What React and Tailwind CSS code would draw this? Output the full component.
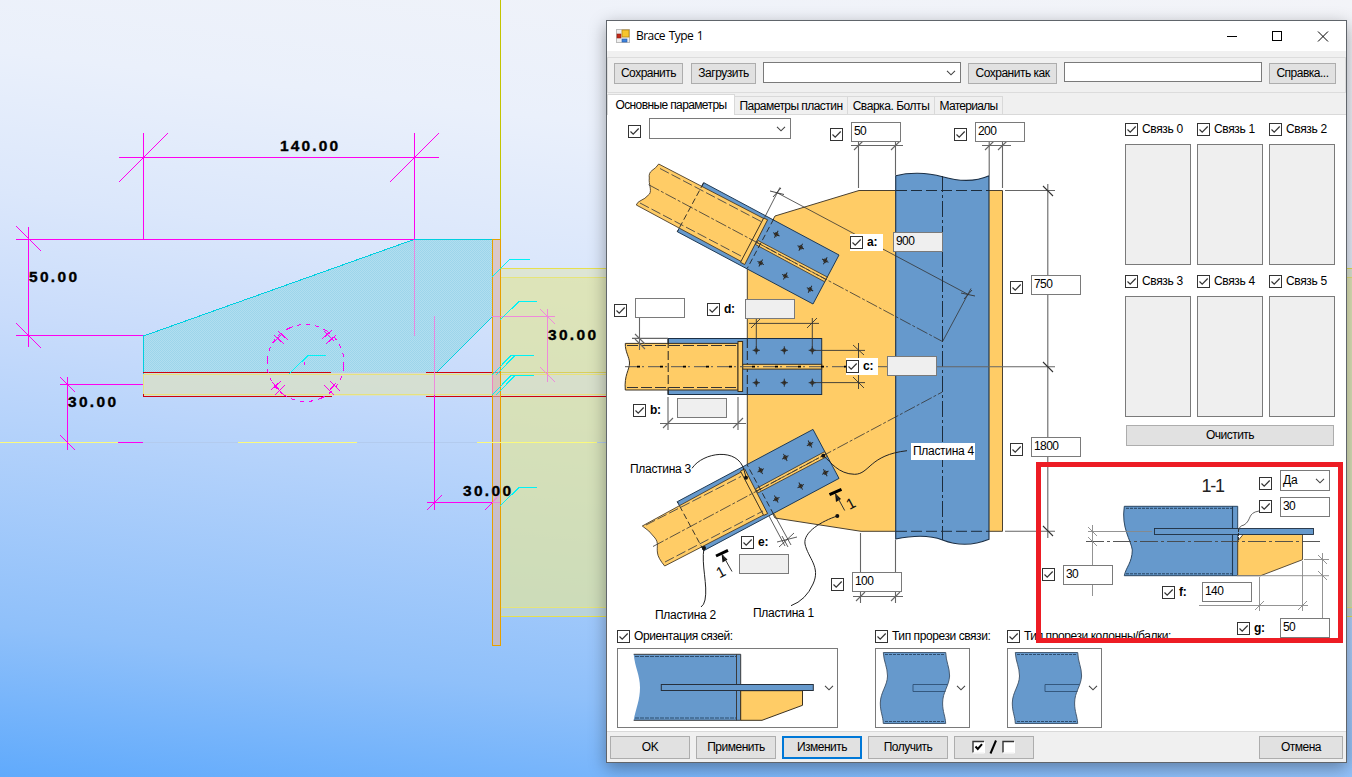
import React from "react";

/* ---------- model view behind the dialog ---------- */

const WELDS = [
  "492,277 510,259 530,259",
  "500,320 519,301.5 537,301.5",
  "492,375 511,355.5 534,355.5",
  "496,375 515,355.5",
  "492,395 511,375.5 534,375.5",
  "496,395 515,375.5",
  "500,506 519,487.5 537,487.5",
  "289,374 308,355.5 326,355.5",
];

function ModelView() {
  return (
    <svg className="absolute inset-0" width="1352" height="777" viewBox="0 0 1352 777" fill="none">
      <defs>
        <pattern id="hatch" width="2" height="2" patternUnits="userSpaceOnUse">
          <rect width="1" height="1" fill="#4fb4dc" opacity=".22" />
          <rect x="1" y="1" width="1" height="1" fill="#4fb4dc" opacity=".22" />
        </pattern>
      </defs>
      <g shapeRendering="crispEdges">
        <rect x="500" y="268" width="852" height="349" fill="#e0e49c" fillOpacity=".7" />
        <rect x="500" y="269" width="852" height="9" fill="#dbe6f0" fillOpacity=".5" />
        <rect x="500" y="607" width="852" height="9" fill="#b4d0e6" fillOpacity=".75" />
        <path d="M501 268.5H1352M501 616.5H1352" stroke="#e6e04e" />
        <path d="M501 277.5H1352M501 607.5H1352" stroke="#e6e47a" />
        <polygon points="143,336 414,240 492,240 492,317 436,373 143,373" fill="#b2def0" />
        <polygon points="143,336 414,240 492,240 492,317 436,373 143,373" fill="url(#hatch)" />
        <rect x="143" y="373" width="464" height="23" fill="#d6dfcd" fillOpacity=".9" />
        <path d="M143.5 374V336L414 239.5H492M492 317L436 373" stroke="#00cfdf" />
        <path d="M143 372.5H500M143 396.5H332" stroke="#b9cfe6" />
        <path d="M143 374.5H607M143 394.5H607M143.5 374V394" stroke="#e8e27c" />
        <path d="M143 372.5H331M426 372.5H500M143.5 394V397M143 396.5H332M426 396.5H607" stroke="#cc0010" />
        <path d="M500 372.5H607" stroke="#d9cf5c" />
        <rect x="493" y="240" width="8" height="405" fill="#d8b4ac" fillOpacity=".62" />
        <path d="M500.5 0V240" stroke="#c3c400" />
        <rect x="492.5" y="239.5" width="8" height="406" stroke="#e6a000" />
        <path d="M143 442.5H238M357 442.5H477M597 442.5H607" stroke="#b3cbee" />
        <path d="M0 442.5H118M238 442.5H357M477 442.5H597" stroke="#fbfa7c" />
        <g stroke="#ff00f0">
          <path d="M119 157.5H439M143.5 133V239M414.5 133V239M16 239.5H414M28.5 227V347M16 335.5H143" />
          <path d="M67.5 377V450M60 384.5H143M118 442.5H143M434.5 395V510M427 502.5H492" />
          <path d="M119 182L168 133M390 182L439 133M16 226L41 251M16 323L41 348M60 377L75 392M60 435L75 450M427 510L442 495M485 510L493 502" />
          <path d="M274 335L284 344M278 331L288 340M273 343L282 334M322 339L332 330M326 344L336 335M324 331L334 341M271 390L281 381M275 395L285 385M272 382L281 392M324 385L334 395M330 381L340 391M336 383L329 391" />
          <path d="M304.5 362V365" />
          <circle cx="305.5" cy="363" r="38.5" strokeDasharray="8 5 4 5 4 5 4 5" />
        </g>
        <g stroke="#f37be0" opacity=".85">
          <path d="M414.5 240V336M434.5 316V395M492 316.5H555M547.5 309V382M492 502.5H500M492 375V394" />
          <path d="M540 309L555 324M540 367L555 382M492 503L499 495" />
        </g>
        <g stroke="#00f2f6">
          {WELDS.map((p) => (
            <polyline key={p} points={p} />
          ))}
        </g>
      </g>
      <g className="tracking-normal" fill="#000" fontFamily="'Liberation Sans', Arial, sans-serif" fontWeight="700" fontSize="15.5" stroke="#000" strokeWidth=".35">
        <text x="280" y="151.3" textLength="58">140.00</text>
        <text x="29" y="282.3" textLength="48">50.00</text>
        <text x="68" y="407.3" textLength="48">30.00</text>
        <text x="548" y="340.3" textLength="48">30.00</text>
        <text x="463" y="496.3" textLength="48">30.00</text>
      </g>
    </svg>
  );
}

/* ---------- connection drawing ---------- */

const BLUE = "#6699cc";
const ORANGE = "#ffcc66";
const BOLTS = [
  [776.3, 234.3], [800.7, 247.3], [825.3, 260.7],
  [760.7, 263], [785.3, 276], [810, 289.3],
];
const MID_BOLTS = [
  [756.3, 350.3], [784.3, 350.3], [812.3, 350.3],
  [756.3, 382.7], [784.3, 382.7], [812.3, 382.7],
];

function Bolt({ x, y, turn }) {
  return (
    <g transform={`translate(${x} ${y}) rotate(${turn})`}>
      <circle r="1.8" fill="#6a5a40" stroke="#222" strokeWidth=".6" />
      <path d="M-3.6 0H3.6M0 -4V4" stroke="#222" strokeWidth=".9" />
    </g>
  );
}

function BraceTube({ edge }) {
  return <path d={edge} fill={ORANGE} stroke="#4a3c28" strokeWidth=".9" />;
}

function BracePlates() {
  return (
    <>
      <polygon points="755.5,244.5 758,240.5 827.2,277 824.5,281.7" fill={ORANGE} stroke="#3a3020" strokeWidth=".8" />
      <path d="M757 242.5L826 279.5" stroke="#222" strokeWidth=".7" strokeDasharray="6 2" />
      <polygon points="763.7,218 767.6,219.8 744.7,264.5 740.5,262.3" fill={ORANGE} stroke="#3a3020" strokeWidth=".9" />
      <path d="M703.7 182.7L677.3 231.7M773.7 219L747.3 268.3" stroke="#222" strokeWidth=".9" strokeDasharray="6 3" />
      {BOLTS.map(([x, y]) => (
        <Bolt key={x} x={x} y={y} turn={28} />
      ))}
    </>
  );
}

const UPPER_TUBE = "M763.7 218.5L658.7 164Q656 168 652 170.5Q648.5 173 649.3 178C648.5 184 652 190 649.5 194Q645 199 640 201Q637.5 202 636.3 205L741.3 261.5Z";
const LOWER_TUBE = "M763.7 514.9L664.7 566Q658 558 657.5 553C656.5 547 659 543 655 538Q649 530 642.3 526L741.3 471.9Z";
const WING = "703.7,182.7 839,255 813,304 677.3,231.7";

function SectionView() {
  return (
    <g strokeWidth=".9">
      <path d="M1124.3 506.3H1237.7V575.7H1124.3C1126 567 1132 563 1132.3 550C1131 540 1121 528 1124.3 506.3Z" fill={BLUE} stroke="#1f3a55" />
      <path d="M1126 508.3H1232M1126 573.8H1232" stroke="#1f3a55" strokeDasharray="3 1" />
      <path d="M1232.5 506.3V575.7" stroke="#1f3a55" strokeWidth="1.1" />
      <polygon points="1243.3,534.3 1302.5,534.3 1302.5,559.7 1260.7,575.7 1237.7,575.7 1237.7,541" fill={ORANGE} stroke="#4a4030" />
      <rect x="1154.5" y="528.5" width="159" height="6" fill={BLUE} stroke="#1f2f3f" />
      <path d="M1238.5 529V541" stroke="#222" strokeDasharray="3 1" />
      <path d="M1086 541.5H1322" stroke="#444" strokeDasharray="18 3 3 3" />
      <g stroke="#888">
        <path d="M1088 531.5H1152M1092.5 525V596M1237 575.7H1329M1304 559.5H1329M1322.5 553V618M1199 605.5H1308M1259.5 577V611M1302.5 561V611" />
        <path d="M1088 527L1097 536M1088 537L1097 546M1318 555L1327 564M1318 571L1327 580M1255 610L1264 601M1298 610L1307 601" />
      </g>
      <path d="M1259 511C1247 513 1252 520 1244 525Q1239 526 1239 530" stroke="#555" fill="none" />
      <text className="tracking-normal" x="1201.5" y="491.8" fontSize="18" fill="#222" fontFamily="'Liberation Sans', Arial, sans-serif" textLength="23.5">1-1</text>
    </g>
  );
}

function ConnectionDrawing() {
  return (
    <svg className="absolute inset-0" width="738" height="616" viewBox="607 115 738 616" fill="none">
      <polygon points="775,216 859,190.5 1002.5,190.5 1002.5,531.3 861,531.3 775,518 747.3,465 747.3,268" fill={ORANGE} stroke="#4a4030" />
      <path d="M895.7 175.7C908 172.5 926 172 942.5 176.7S975 182 989 175.7V539.3C975 545 958 546 942.5 540S908 536.5 895.7 539Z" fill={BLUE} stroke="#1b2f45" strokeWidth="1.1" />
      <path d="M896 190.5H989M896 531.3H989" stroke="#1c2c3c" strokeDasharray="11 4" />
      <path d="M942.5 176V540" stroke="#1c2c3c" strokeDasharray="16 3 3 3" />

      <polygon points={WING} fill={BLUE} stroke="#1f3a55" />
      <BraceTube edge={UPPER_TUBE} />
      <BracePlates />
      <path d="M660 168.5L763 222.5M640 203L741 256" stroke="#444" strokeWidth=".9" strokeDasharray="10 3" />
      <path d="M648.6 184.7L942.5 341.5" stroke="#333" strokeWidth=".8" strokeDasharray="12 2 3 2" />

      <g transform="translate(0 733.4) scale(1 -1)">
        <polygon points={WING} fill={BLUE} stroke="#1f3a55" />
      </g>
      <BraceTube edge={LOWER_TUBE} />
      <g transform="translate(0 733.4) scale(1 -1)">
        <BracePlates />
      </g>
      <path d="M665 562L763 511M646 525L741 476.5" stroke="#444" strokeWidth=".9" strokeDasharray="10 3" />
      <path d="M653 546.5L942.5 391.9" stroke="#333" strokeWidth=".8" strokeDasharray="12 2 3 2" />

      <rect x="668" y="338.5" width="153.7" height="56" fill={BLUE} stroke="#1b2f45" />
      <path d="M738 343.4H625.3C625 352 629.5 357 629.5 363C629.5 370 624 375 625.3 390H738Z" fill={ORANGE} stroke="#3a3020" />
      <path d="M627 345.5H738M627 387.5H738" stroke="#333" strokeDasharray="11 3" />
      <path d="M668.2 339V394M747.3 339V394" stroke="#222" strokeDasharray="9 3" />
      <rect x="742.7" y="364.3" width="79" height="4.8" fill={ORANGE} stroke="#3a3020" />
      <rect x="738" y="341.5" width="4.6" height="50" fill={ORANGE} stroke="#3a3020" />
      <path d="M625 366.7H888" stroke="#555" strokeDasharray="13 4 2 4" />
      <path d="M637 366.7H888" stroke="#000" strokeDasharray="3 20" strokeWidth="1.8" />
      {MID_BOLTS.map(([x, y]) => (
        <Bolt key={`${x}-${y}`} x={x} y={y} turn={0} />
      ))}

      <g stroke="#666" strokeWidth="1.1">
        <path d="M851 145.5H903M858.5 142V188M895.5 142V175M982 145.5H1011M989.2 142V175M1002.5 142V188" />
        <path d="M854 150L863 141M891 150L900 141M985 150L994 141M998 150L1007 141" />
        <path d="M1005 190.5H1055M936 366.7H1055M1005 531.3H1055M1047.8 184V538" stroke="#666" />
        <path d="M1043 186L1053 196M1043 362L1053 372M1043 526L1053 536" stroke="#333" />
        <path d="M853 596.5H903M860.5 533V603M895.5 540V603M856 601L865 592M891 601L900 592" />
        <path d="M660 423.5H746M668 397V430M738 397V430M663 428L673 418M733 428L743 418" />
        <path d="M639.5 318V350M632 338.4H668M635 334L645 344M635 339L645 349" />
      </g>
      <g stroke="#333" strokeWidth=".9">
        <path d="M749 323.4H819M756.3 318V350M812.3 318V350M751 328L761 318M807 328L817 318" />
        <path d="M812 350.4H865M812 382.6H865M858.5 343V389M853 345L864 355M853 377L864 388" />
        <path d="M777 192.7L968.3 294.5M764.7 217.3L780 187.3M942.7 341.3L971 288.5" strokeWidth=".8" />
        <path d="M770 191L784 194.5M773 197L781 188M961 293L975 296M964 299L972 290" />
        <path d="M769 516L785 546M774 514L791 545M779 547L794 533M777 542L797 537M782 536L788 547" strokeWidth=".8" />
      </g>
      <g stroke="#222" strokeWidth="1">
        <path d="M692 468.3C703 452 738 447 744 470L746 477" />
        <path d="M704 548C701 565 708 585 705 600Q704 605 701 607" />
        <path d="M837.3 516C822 521 803 532 805 544C808 558 821 567 813 584Q806 600 791 605.7" />
        <path d="M823.3 455.7C831 462 838 474 854.7 474.3C870 474 869 455 907 450.7" />
      </g>
      <g fill="#111">
        <circle cx="746" cy="477.7" r="2" />
        <circle cx="704" cy="548" r="2" />
        <circle cx="837.3" cy="516" r="2" />
        <circle cx="823.3" cy="455.7" r="2" />
        <polygon points="835,493 841,499 836,502" />
        <polygon points="721.6,554 727.5,559.5 722.5,562.5" />
      </g>
      <path d="M829.5 494.7L841.5 489.3M716 556L728 550.3" stroke="#000" strokeWidth="3" />
      <path d="M844.7 510.5L835.7 494M732 571.5L722.3 554.3" stroke="#333" />
      <g fill="#111" fontFamily="'Liberation Sans', Arial, sans-serif" fontSize="15">
        <text transform="translate(849.5 510) rotate(-28)">1</text>
        <text transform="translate(719.5 578.5) rotate(-28)">1</text>
      </g>
      <SectionView />
    </svg>
  );
}

/* ---------- form controls ---------- */

function Check() {
  return (
    <span className="flex h-[13px] w-[13px] shrink-0 items-center justify-center border border-[#333] bg-white">
      <svg width="11" height="11" viewBox="0 0 11 11" fill="none">
        <path d="M1.5 5.5L4.2 8.2L9.7 2.5" stroke="#333" strokeWidth="1.2" />
      </svg>
    </span>
  );
}

function Chevron() {
  return (
    <svg className="shrink-0" width="10" height="6" viewBox="0 0 10 6" fill="none">
      <path d="M1 .8L5 4.8L9 .8" stroke="#444" strokeWidth="1.1" />
    </svg>
  );
}

function Field({ value, className = "", off }) {
  return (
    <span className={`flex h-5 w-[50px] items-center border border-[#7a7a7a] pl-[2px] ${off ? "bg-[#efefef]" : "bg-white"} ${className}`}>
      <span className="pb-[2px] tracking-[-0.6px]">{value}</span>
    </span>
  );
}

function Combo({ value, className = "" }) {
  return (
    <span className={`flex h-[21px] items-center justify-between border border-[#7a7a7a] bg-white pl-[2px] pr-1 ${className}`}>
      <span className="pb-[2px]">{value}</span>
      <Chevron />
    </span>
  );
}

function Button({ children, className = "" }) {
  return (
    <span className={`flex items-center justify-center border border-[#adadad] bg-[#e1e1e1] pb-[2px] tracking-[-0.5px] ${className}`}>{children}</span>
  );
}

const CHECK_PINS = [
  "left-[21px] top-[10px]", "left-[223px] top-[13px]", "left-[347px] top-[13px]",
  "left-[403px] top-[166px]", "left-[403px] top-[328px]", "left-[7px] top-[189px]",
  "left-[224px] top-[463px]", "left-[435px] top-[453px]",
  "left-[652px] top-[362px]", "left-[652px] top-[385px]",
];

const NAMED_PINS = [
  ["a:", "left-[243px] top-[119px] w-[33px] h-[17px] bg-white"],
  ["c:", "left-[239px] top-[243px] w-[32px] h-[17px] bg-white"],
  ["d:", "left-[100px] top-[185px] h-[18px]"],
  ["b:", "left-[26px] top-[286px] h-[18px]"],
  ["e:", "left-[134px] top-[418px] h-[18px]"],
  ["f:", "left-[555px] top-[468px] h-[18px]"],
  ["g:", "left-[630px] top-[504px] h-[18px]"],
];

const FIELD_PINS = [
  ["50", "left-[244px] top-[7px]"],
  ["200", "left-[368px] top-[7px]"],
  ["900", "left-[286px] top-[117px]", true],
  ["750", "left-[424px] top-[160px]"],
  ["1800", "left-[424px] top-[322px]"],
  ["", "left-[28px] top-[183px]"],
  ["", "left-[138px] top-[184px]", true],
  ["", "left-[280px] top-[241px]", true],
  ["", "left-[70px] top-[283px]", true],
  ["", "left-[132px] top-[439px]", true],
  ["100", "left-[245px] top-[457px]"],
  ["30", "left-[456px] top-[450px]"],
  ["30", "left-[673px] top-[382px]"],
  ["140", "left-[595px] top-[467px]"],
  ["50", "left-[673px] top-[503px]"],
];

const PLATE_LABELS = [
  ["Пластина 3", "left-[23px] top-[346px]"],
  ["Пластина 2", "left-[48px] top-[492px]"],
  ["Пластина 1", "left-[146px] top-[490px]"],
  ["Пластина 4", "left-[304px] top-[328px] w-[64px] h-[17px] bg-white pb-[2px] pl-[2px]"],
];

function DrawingPins() {
  return (
    <>
      {CHECK_PINS.map((at) => (
        <span key={at} className={`absolute ${at}`}><Check /></span>
      ))}
      {NAMED_PINS.map(([name, at]) => (
        <span key={name} className={`absolute flex items-center gap-1 font-bold ${at}`}>
          <Check />
          <span className="pb-px">{name}</span>
        </span>
      ))}
      {FIELD_PINS.map(([value, at, off]) => (
        <Field key={at} value={value} off={off} className={`absolute ${at}`} />
      ))}
      <Combo className="absolute left-[42px] top-[3px] w-[142px]" />
      <Combo value="Да" className="absolute left-[673px] top-[355px] w-[50px]" />
      {PLATE_LABELS.map(([name, at]) => (
        <span key={name} className={`absolute flex h-4 items-center whitespace-nowrap tracking-[-0.3px] ${at}`}>{name}</span>
      ))}
    </>
  );
}

function LinkPicker({ index }) {
  return (
    <div className="flex h-[152px] flex-col">
      <div className="flex h-[17px] items-center gap-1 whitespace-nowrap">
        <Check />
        <span className="pb-[2px] tracking-[-0.35px]">Связь {index}</span>
      </div>
      <div className="mt-[6px] h-[121px] w-[66px] border border-[#7a7a7a] bg-[#efefef]" />
    </div>
  );
}

function OrientationThumb() {
  return (
    <svg width="200" height="78" viewBox="618 649 200 78" fill="none">
      <path d="M633.7 654.3H740.7V720.3H633.7C636 708 640 700 640 687.5C640 675 635 668 633.7 654.3Z" fill={BLUE} />
      <path d="M633.7 654.3H740.7V720.3H633.7M736.5 654.3V720.3" stroke="#3b3b3b" />
      <path d="M635 656.5H736M635 718H736" stroke="#1f3a55" strokeDasharray="4 1" strokeWidth=".8" />
      <polygon points="740.7,690.7 802.5,690.7 802.5,705.3 762,720.3 740.7,720.3" fill={ORANGE} stroke="#3a3020" />
      <rect x="661.3" y="684.5" width="152" height="6" fill={BLUE} stroke="#26303c" />
    </svg>
  );
}

function SlotThumb() {
  return (
    <svg width="75" height="78" viewBox="876 649 75 78" fill="none">
      <path d="M883.3 652.5H945.7C946 662 949.6 667 949.6 676C949 686 942.6 692 942.6 703C942.6 712 945.3 716 945.7 723.5H883.3C883 716 880.3 712 880.3 703C880.5 692 887.3 686 887.5 676C887.5 667 883.8 662 883.3 652.5Z" fill={BLUE} stroke="#3b4f65" strokeWidth=".9" />
      <path d="M885 654.5H945M885 721.5H945" stroke="#1f3a55" strokeDasharray="3 1" strokeWidth=".8" />
      <path d="M947.5 684.5H913V691.5H945.5" stroke="#2f5075" strokeWidth=".9" />
    </svg>
  );
}

function ThumbPicker({ label, className, children }) {
  return (
    <div className={className}>
      <div className="flex h-[13px] items-center gap-1 whitespace-nowrap tracking-[-0.43px]">
        <Check />
        <span className="pb-px">{label}</span>
      </div>
      <div className="mt-[5px] flex h-20 items-center justify-between border border-[#7a7a7a] bg-white pr-[3px]">
        {children}
        <Chevron />
      </div>
    </div>
  );
}

/* ---------- dialog ---------- */

function TitleBar() {
  return (
    <div className="flex h-[30px] items-center bg-white pl-[9px] pr-[17px]">
      <svg width="14" height="14" viewBox="0 0 14 14">
        <rect x=".5" y=".5" width="13" height="13" fill="#eee" stroke="#bbb" />
        <rect x="1" y="5" width="4" height="4" fill="#c22a1a" stroke="#8f1c10" strokeWidth=".6" />
        <rect x="6" y="1" width="7" height="7" fill="#f6c52e" stroke="#b98710" strokeWidth=".8" />
        <rect x="6" y="10" width="5" height="3" fill="#3c82dc" stroke="#2459a8" strokeWidth=".6" />
      </svg>
      <span className="ml-[6px] font-['Open_Sans','Noto_Sans',sans-serif] tracking-[-0.55px] [word-spacing:1px]">Brace Type 1</span>
      <svg className="ml-auto" width="102" height="11" viewBox="0 0 102 11" fill="none" stroke="#000">
        <path d="M0 5.5H10" />
        <rect x="45.5" y=".5" width="9" height="9" />
        <path d="M91 .5L101 10.5M101 .5L91 10.5" />
      </svg>
    </div>
  );
}

function Toolbar() {
  return (
    <div className="mt-[6px] flex h-[36px] gap-[7px] border border-[#dcdcdc] pl-[6px] pt-1">
      <Button className="mt-px h-[21px] w-[69px]">Сохранить</Button>
      <Button className="ml-px mt-px h-[21px] w-[65px]">Загрузить</Button>
      <Combo className="w-[198px]" />
      <Button className="mt-px h-[21px] w-[89px]">Сохранить как</Button>
      <span className="h-5 w-[198px] border border-[#7a7a7a] bg-white" />
      <Button className="mt-px h-[21px] w-[67px]">Справка...</Button>
    </div>
  );
}

function Tabs() {
  const tab = "flex h-[18px] items-center justify-center whitespace-nowrap border border-b-0 border-l-0 border-[#d9d9d9]";
  return (
    <div className="mt-px flex h-[21px] items-end border-b border-[#d9d9d9]">
      <div className="-mb-px flex h-[21px] w-[128px] items-center justify-center whitespace-nowrap border border-b-0 border-[#d9d9d9] bg-white pb-px tracking-[-0.62px]">
        Основные параметры
      </div>
      <div className={`${tab} w-[113px] tracking-[-0.55px]`}>Параметры пластин</div>
      <div className={`${tab} w-[87px] tracking-[-0.45px]`}>Сварка. Болты</div>
      <div className={`${tab} w-[68px] tracking-[-0.7px]`}>Материалы</div>
    </div>
  );
}

function MainPage() {
  return (
    <div className="relative h-[616px] bg-white">
      <ConnectionDrawing />
      <div className="relative ml-[518px] pt-[6px]">
        <div className="grid w-[210px] grid-cols-[66px_66px_66px] gap-x-[6px]">
          {[0, 1, 2, 3, 4, 5].map((n) => (
            <LinkPicker key={n} index={n} />
          ))}
        </div>
        <Button className="ml-px h-[21px] w-[208px]">Очистить</Button>
      </div>
      <div className="relative ml-[10px] mt-[184px] flex">
        <ThumbPicker label="Ориентация сязей:" className="w-[221px]"><OrientationThumb /></ThumbPicker>
        <ThumbPicker label="Тип прорези связи:" className="ml-[37px] w-[95px]"><SlotThumb /></ThumbPicker>
        <ThumbPicker label="Тип прорези колонны/балки:" className="ml-[37px] w-[95px]"><SlotThumb /></ThumbPicker>
      </div>
      <DrawingPins />
      <div className="absolute left-[429px] top-[347px] h-[181px] w-[307px] border-[5px] border-[#ed1c24]" />
    </div>
  );
}

function Footer() {
  return (
    <div className="flex h-[31px] gap-[6px] border-t border-[#d9d9d9] pl-[3px] pr-[3px] pt-1">
      <Button className="h-[23px] w-20">OK</Button>
      <Button className="h-[23px] w-20">Применить</Button>
      <Button className="h-[23px] w-20 outline-2 -outline-offset-2 outline-[#0078d7]">Изменить</Button>
      <Button className="h-[23px] w-20">Получить</Button>
      <Button className="h-[23px] w-20">
        <svg width="44" height="14" viewBox="0 0 44 14" fill="none">
          <rect x="1" y="1.5" width="11" height="11" fill="#fff" />
          <path d="M1 12.5V1.5H12" stroke="#333" strokeWidth="1.4" />
          <path d="M12.5 2V13H1" stroke="#fff" />
          <path d="M3.5 6.5L5.8 9L10 4.2" stroke="#000" strokeWidth="2" />
          <path d="M18.5 13.5L24 .5" stroke="#000" strokeWidth="2" />
          <rect x="31" y="1.5" width="11" height="11" fill="#fff" />
          <path d="M31 12.5V1.5H42" stroke="#333" strokeWidth="1.4" />
          <path d="M42.5 2V13H31" stroke="#fff" />
        </svg>
      </Button>
      <Button className="ml-auto h-[23px] w-[84px]">Отмена</Button>
    </div>
  );
}

export default function App() {
  return (
    <div className="relative h-[777px] w-[1352px] overflow-hidden bg-[linear-gradient(187deg,#f3f4f8_0%,#eaf0fb_23%,#dbe7fb_38%,#c9dcfb_51%,#b6d3fb_62%,#8fc0fa_84%,#60aafc_100%)] font-['Liberation_Sans',Arial,sans-serif] text-[12px] leading-none tracking-[-0.25px] text-black">
      <ModelView />
      <div className="absolute left-[606px] top-[20px] flex h-[743px] w-[741px] flex-col border border-[#60656b] bg-[#f0f0f0] shadow-[0_5px_16px_rgba(0,0,0,0.35)]">
        <TitleBar />
        <Toolbar />
        <Tabs />
        <MainPage />
        <Footer />
      </div>
    </div>
  );
}
